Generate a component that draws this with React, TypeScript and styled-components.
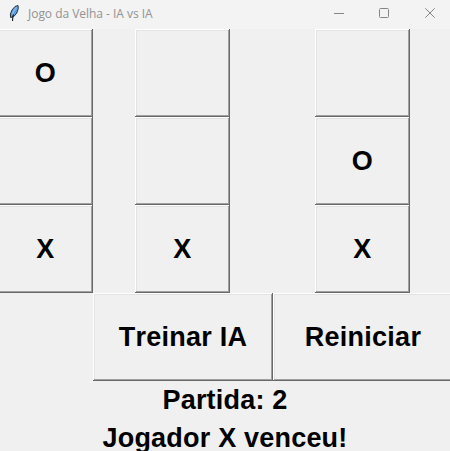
import React from 'react';
import styled, { createGlobalStyle } from 'styled-components';

const GlobalStyle = createGlobalStyle`
  * { box-sizing: border-box; }
  body { margin: 0; background: #f0f0f0; overflow: hidden; }
`;

const Window = styled.main`
  width: 450px;
  height: 451px;
  overflow: hidden;
  background: #f0f0f0;
  color: #000;
  font-family: 'Liberation Sans', Arial, sans-serif;
`;

const TitleBar = styled.header`
  display: flex;
  align-items: center;
  height: 29px;
  padding: 0 0 3px 7px;
  background: #f3f3f3;
`;

const Title = styled.span`
  flex: 1;
  margin-left: 7px;
  padding-top: 2px;
  color: #929292;
  font: 12px/16px 'Open Sans', 'Noto Sans', sans-serif;
  letter-spacing: -0.03px;
  white-space: nowrap;
`;

const Controls = styled.div`
  display: flex;
  height: 26px;
`;

const Control = styled.button`
  display: grid;
  place-items: center;
  width: 46px;
  padding: 0;
  border: 0;
  background: none;
  &:first-child { width: 45px; }
  &:last-child { width: 43px; padding-left: 3px; }
`;

const Board = styled.section`
  display: grid;
  grid-template-columns: 93px 180px 180px;
  grid-auto-rows: 88px;
  width: 453px;
`;

const Slot = styled.div<{ $edge: boolean }>`
  display: flex;
  justify-content: ${({ $edge }) => ($edge ? 'flex-end' : 'flex-start')};
  padding-left: ${({ $edge }) => ($edge ? 0 : 42)}px;
`;

const RaisedButton = styled.button<{ $width: number }>`
  flex: none;
  width: ${({ $width }) => $width}px;
  height: 88px;
  padding: 0;
  border: 0;
  background: #f0f0f0;
  box-shadow:
    inset -1px -1px #696969,
    inset 1px 1px #fff,
    inset -2px -2px #a0a0a0,
    inset 2px 2px #e3e3e3;
  color: #000;
  font: bold 27px/32px 'Liberation Sans', Arial, sans-serif;
  font-kerning: none;
  letter-spacing: 0.25px;
`;

const Action = styled(RaisedButton)<{ $column: number }>`
  grid-column: ${({ $column }) => $column};
`;

const Status = styled.p`
  height: 38px;
  margin: 0;
  text-align: center;
  font: bold 27px/38px 'Liberation Sans', Arial, sans-serif;
  font-kerning: none;
  letter-spacing: 0.2px;
`;

const cells = ['O', '', '', '', '', 'O', 'X', 'X', 'X'];

const Feather = () => (
  <svg width="14" height="18" viewBox="0 0 14 18" aria-hidden="true">
    <path d="M11 1.5 8 2.5 5 6 3.4 10 3.6 13.5 6.8 12.5 9.8 9 11.3 4.5Z" fill="#5a9fe2" stroke="#29323b" />
    <path d="M9.8 3.2 7 6.5 5.3 10.5" fill="none" stroke="#8dbcea" strokeWidth="1.2" />
    <path d="M6.5 10.5 5.8 13 5.5 17" fill="none" stroke="#101820" strokeWidth="1.1" />
  </svg>
);

export default function App() {
  return (
    <Window>
      <GlobalStyle />
      <TitleBar>
        <Feather />
        <Title>Jogo da Velha - IA vs IA</Title>
        <Controls>
          <Control aria-label="Minimizar">
            <svg width="10" height="10"><path d="M0 5.5H10" stroke="#868686" /></svg>
          </Control>
          <Control aria-label="Maximizar">
            <svg width="10" height="10"><rect x=".5" y=".5" width="9" height="9" rx="1" fill="none" stroke="#868686" /></svg>
          </Control>
          <Control aria-label="Fechar">
            <svg width="10" height="10"><path d="M.3.3 9.7 9.7M9.7.3.3 9.7" stroke="#868686" /></svg>
          </Control>
        </Controls>
      </TitleBar>
      <Board>
        {cells.map((mark, i) => (
          <Slot key={i} $edge={i % 3 === 0}>
            <RaisedButton $width={95}>{mark}</RaisedButton>
          </Slot>
        ))}
        <Action $column={2} $width={180}>Treinar IA</Action>
        <Action $column={3} $width={180}>Reiniciar</Action>
      </Board>
      <Status>Partida: 2</Status>
      <Status>Jogador X venceu!</Status>
    </Window>
  );
}
